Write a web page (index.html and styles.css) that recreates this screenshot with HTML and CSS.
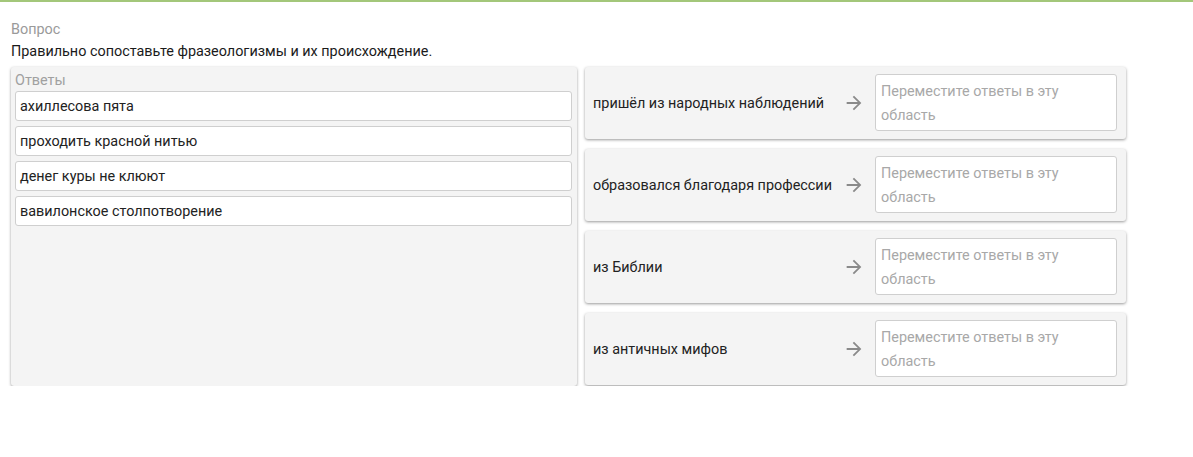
FILE: index.html
```html
<!DOCTYPE html>
<html lang="ru">
<head>
<meta charset="utf-8">
<link rel="stylesheet" href="styles.css">
</head>
<body>
<div class="topline"></div>
<div class="content">
  <div class="qlabel">Вопрос</div>
  <div class="qtext">Правильно сопоставьте фразеологизмы и их происхождение.</div>
  <div class="match">
    <div class="answers">
      <div class="answers-title">Ответы</div>
      <div class="item">ахиллесова пята</div>
      <div class="item">проходить красной нитью</div>
      <div class="item">денег куры не клюют</div>
      <div class="item">вавилонское столпотворение</div>
    </div>
    <div class="targets">
      <div class="row">
        <div class="label">пришёл из народных наблюдений</div>
        <svg class="arrow" viewBox="0 0 24 24"><path d="M12 4l-1.41 1.41L16.17 11H4v2h12.17l-5.58 5.59L12 20l8-8z"/></svg>
        <div class="drop">Переместите ответы в эту область</div>
      </div>
      <div class="row">
        <div class="label">образовался благодаря профессии</div>
        <svg class="arrow" viewBox="0 0 24 24"><path d="M12 4l-1.41 1.41L16.17 11H4v2h12.17l-5.58 5.59L12 20l8-8z"/></svg>
        <div class="drop">Переместите ответы в эту область</div>
      </div>
      <div class="row">
        <div class="label">из Библии</div>
        <svg class="arrow" viewBox="0 0 24 24"><path d="M12 4l-1.41 1.41L16.17 11H4v2h12.17l-5.58 5.59L12 20l8-8z"/></svg>
        <div class="drop">Переместите ответы в эту область</div>
      </div>
      <div class="row">
        <div class="label">из античных мифов</div>
        <svg class="arrow" viewBox="0 0 24 24"><path d="M12 4l-1.41 1.41L16.17 11H4v2h12.17l-5.58 5.59L12 20l8-8z"/></svg>
        <div class="drop">Переместите ответы в эту область</div>
      </div>
    </div>
  </div>
</div>
</body>
</html>
```
FILE: styles.css
```css
html, body {
  margin: 0;
  padding: 0;
  background: #fff;
}
body {
  font-family: Roboto, "Liberation Sans", sans-serif;
  font-size: 14.4px;
  color: #222;
}
.topline {
  height: 2px;
  background: #a3c77a;
}
.content {
  padding: 18px 0 0 11px;
}
.qlabel {
  color: #9a9a9a;
  line-height: 20px;
}
.qtext {
  margin-top: 2px;
  line-height: 20px;
  color: #1a1a1a;
}
.match {
  margin-top: 5px;
  display: flex;
  gap: 8px;
  align-items: flex-start;
}
.answers {
  width: 566px;
  height: 319px;
  box-sizing: border-box;
  background: #f4f4f4;
  border-radius: 3px;
  box-shadow: 0 1px 3px rgba(0,0,0,0.4);
  padding: 4px 5px 4px 4px;
  display: flex;
  flex-direction: column;
  gap: 5px;
}
.answers-title {
  color: #a0a0a0;
  line-height: 20px;
  margin-bottom: -5px;
}
.item {
  height: 30px;
  box-sizing: border-box;
  background: #fff;
  border: 1px solid #cfcfcf;
  border-radius: 3px;
  padding: 1px 4px 0;
  line-height: 27px;
  color: #222;
}
.targets {
  width: 541px;
  display: flex;
  flex-direction: column;
  gap: 10px;
}
.row {
  height: 72px;
  box-sizing: border-box;
  background: #f4f4f4;
  border-radius: 3px;
  box-shadow: 0 1px 3px rgba(0,0,0,0.4);
  display: flex;
  align-items: center;
  padding: 0 9px 0 8px;
}
.label {
  flex: 1;
  color: #222;
  padding-top: 1px;
}
.arrow {
  width: 22px;
  height: 22px;
  fill: #8a8a8a;
  margin-right: 10px;
}
.drop {
  width: 242px;
  height: 57px;
  box-sizing: border-box;
  background: #fff;
  border: 1px solid #cfcfcf;
  border-radius: 3px;
  padding: 5px 5px 3px;
  line-height: 24px;
  color: #a8a8a8;
  margin-bottom: 2px;
}
```
